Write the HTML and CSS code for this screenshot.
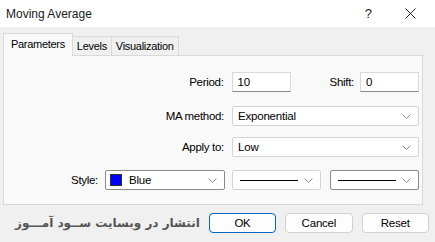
FILE: index.html
```html
<!DOCTYPE html>
<html lang="en">
<head>
    <meta charset="UTF-8">
    <title>Moving Average</title>
    <link rel="stylesheet" href="styles.css">
</head>
<body>
    <div class="dialog">
        <div class="titlebar">
            <span class="title">Moving Average</span>
            <span class="help">?</span>
            <svg class="close" width="11" height="11" viewBox="0 0 11 11">
                <path d="M0.5 0.5 L10.5 10.5 M10.5 0.5 L0.5 10.5" stroke="#222" stroke-width="1" fill="none"/>
            </svg>
        </div>

        <div class="tabs">
            <div class="tab active">Parameters</div>
            <div class="tab">Levels</div>
            <div class="tab">Visualization</div>
        </div>

        <div class="panel">
            <div class="row row1">
                <label class="lbl">Period:</label>
                <div class="field short">10</div>
                <label class="lbl shift">Shift:</label>
                <div class="field short">0</div>
            </div>
            <div class="row row2">
                <label class="lbl">MA method:</label>
                <div class="field select wide">Exponential
                    <svg class="chev" width="9" height="5" viewBox="0 0 9 5"><path d="M0.5 0.5 L4.5 4.5 L8.5 0.5" stroke="#8c8c8c" fill="none"/></svg>
                </div>
            </div>
            <div class="row row3">
                <label class="lbl">Apply to:</label>
                <div class="field select wide">Low
                    <svg class="chev" width="9" height="5" viewBox="0 0 9 5"><path d="M0.5 0.5 L4.5 4.5 L8.5 0.5" stroke="#8c8c8c" fill="none"/></svg>
                </div>
            </div>
            <div class="row row4">
                <label class="lbl">Style:</label>
                <div class="field select color"><span class="swatch"></span>Blue
                    <svg class="chev" width="9" height="5" viewBox="0 0 9 5"><path d="M0.5 0.5 L4.5 4.5 L8.5 0.5" stroke="#8c8c8c" fill="none"/></svg>
                </div>
                <div class="field select line"><span class="stroke"></span>
                    <svg class="chev" width="9" height="5" viewBox="0 0 9 5"><path d="M0.5 0.5 L4.5 4.5 L8.5 0.5" stroke="#8c8c8c" fill="none"/></svg>
                </div>
                <div class="field select line"><span class="stroke"></span>
                    <svg class="chev" width="9" height="5" viewBox="0 0 9 5"><path d="M0.5 0.5 L4.5 4.5 L8.5 0.5" stroke="#8c8c8c" fill="none"/></svg>
                </div>
            </div>
        </div>

        <div class="footer">
            <span class="promo" dir="rtl">انتشار در وبسایت ســود آمـــوز</span>
            <button class="btn ok">OK</button>
            <button class="btn">Cancel</button>
            <button class="btn">Reset</button>
        </div>
    </div>
</body>
</html>
```

FILE: styles.css
```css
html {
    box-sizing: border-box;
    font-family: "Liberation Sans", Arial, sans-serif;
    font-size: 12px;
    color: #000;
}

body {
    margin: 0;
    background: #f0f0f0;
}

*,
*:before,
*:after {
    box-sizing: inherit;
}

.dialog {
    width: 435px;
    height: 242px;
    background: #f0f0f0;
    overflow: hidden;
}

/* title bar */
.titlebar {
    height: 27px;
    background: #fff;
    display: flex;
    align-items: center;
    padding-left: 6px;
}

.title {
    flex: 1;
    font-size: 12px;
    color: #1a1a1a;
}

.help {
    font-size: 13px;
    margin-right: 33px;
    color: #222;
}

.close {
    margin-right: 19px;
}

/* tabs */
.tabs {
    display: flex;
    align-items: flex-end;
    padding-left: 3px;
    margin-top: 6px;
    height: 22px;
}

.tab {
    height: 19px;
    padding: 0 4px;
    border: 1px solid #d9d9d9;
    border-bottom: none;
    border-left: none;
    background: #f0f0f0;
    font-size: 11px;
    letter-spacing: -0.3px;
    line-height: 19px;
}

.tab.active {
    height: 23px;
    margin-bottom: -1px;
    padding: 0 7px;
    background: #f9f9f9;
    border-left: 1px solid #d9d9d9;
    line-height: 20px;
    position: relative;
}

/* panel */
.panel {
    margin-left: 3px;
    width: 420px;
    height: 150px;
    background: #f9f9f9;
    border: 1px solid #d9d9d9;
    padding: 16px 3px 0 0;
}

.row {
    display: flex;
    align-items: center;
    justify-content: flex-end;
    height: 20px;
}

.row2 { margin-top: 14px; }
.row3 { margin-top: 11px; }
.row4 { margin-top: 13px; }

.lbl {
    font-size: 11.5px;
    letter-spacing: -0.3px;
    margin-right: 8px;
}

.lbl.shift {
    margin-left: 39px;
    margin-right: 6px;
}

.row4 .lbl { margin-right: 7px; }

.field {
    height: 20px;
    background: #fff;
    border: 1px solid #d9d9d9;
    border-bottom-color: #8a8a8a;
    font-size: 11.5px;
    letter-spacing: -0.2px;
    line-height: 18px;
    padding-left: 5px;
    position: relative;
}

.short { width: 59px; }
.wide { width: 187px; }

.select {
    border-color: #d4d4d4;
    border-radius: 2px;
}

.chev {
    position: absolute;
    right: 7px;
    top: 7px;
}

.color {
    width: 120px;
    margin-right: 7px;
    border-color: #8a8a8a;
    display: flex;
    align-items: center;
    padding-left: 4px;
}

.swatch {
    width: 12px;
    height: 12px;
    background: #0000ff;
    border: 1px solid #333;
    margin-right: 7px;
}

.line {
    width: 89px;
    display: flex;
    align-items: center;
    padding-left: 7px;
}

.line + .line { margin-left: 9px; }

.line:last-child { border-color: #8a8a8a; }

.stroke {
    width: 58px;
    height: 1px;
    background: #000;
}

/* footer */
.footer {
    display: flex;
    align-items: center;
    height: 36px;
    padding: 0 6px 0 15px;
}

.promo {
    font-family: "DejaVu Sans", sans-serif;
    font-weight: bold;
    font-size: 12px;
    white-space: nowrap;
    color: #555;
    margin-right: auto;
}

.btn {
    width: 72px;
    height: 20px;
    margin-left: 9px;
    background: #fdfdfd;
    border: 1px solid #d0d0d0;
    border-radius: 4px;
    font-family: "Liberation Sans", Arial, sans-serif;
    font-size: 11.5px;
    letter-spacing: -0.2px;
    color: #000;
    padding: 0;
}

.btn.ok {
    border-color: #0067c0;
}
```
